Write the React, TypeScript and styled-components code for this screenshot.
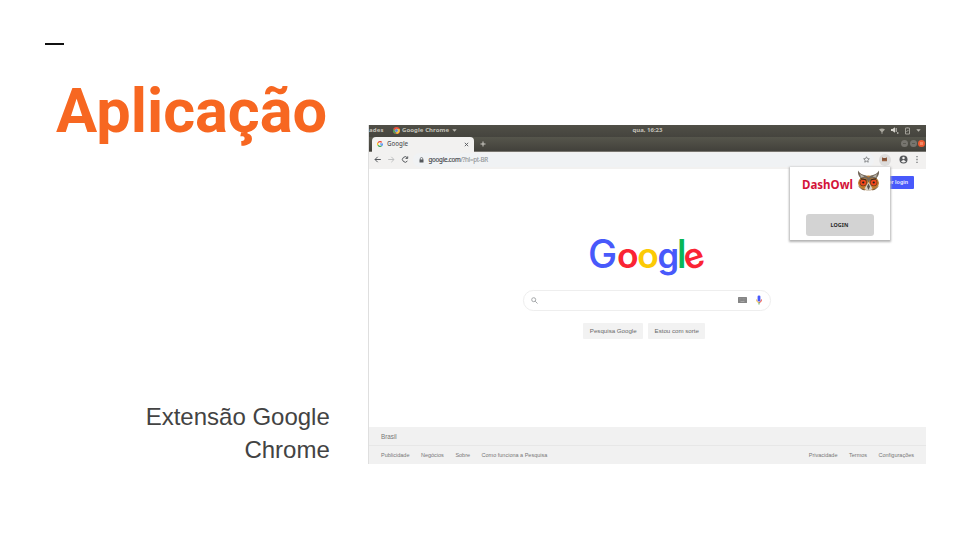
import React from "react";
import styled, { createGlobalStyle } from "styled-components";

const GlobalStyle = createGlobalStyle`
  * { box-sizing: border-box; }
  body { margin: 0; background: #fff; }
  svg { display: block; flex: none; }
`;

const Slide = styled.main`
  width: 960px;
  height: 540px;
  overflow: hidden;
  display: grid;
  grid-template-columns: 330px 558px;
  column-gap: 38px;
  background: #fff;
  font-family: "Liberation Sans", Arial, sans-serif;
`;

const Intro = styled.section`
  display: flex;
  flex-direction: column;
`;

const Dash = styled.div`
  width: 19px;
  height: 2px;
  margin: 42.5px 0 0 44.5px;
  background: #111;
`;

const Title = styled.h1`
  margin: 30.5px 0 0 56px;
  font: 700 61.3px/72px Roboto, sans-serif;
  color: #f76721;
  white-space: nowrap;
`;

const Subtitle = styled.p`
  margin: 253px 0 0 129.8px;
  width: 200px;
  font-size: 24px;
  line-height: 33px;
  text-align: right;
  color: #434343;
`;

const Browser = styled.section`
  width: 558px;
  height: 339px;
  margin-top: 125px;
  display: flex;
  flex-direction: column;
  overflow: hidden;
  background: #fff;
  border-left: 1px solid #dfdfdf;
`;

const SystemBar = styled.div`
  height: 11.5px;
  flex: none;
  display: grid;
  grid-template-columns: 1fr 30px 1fr;
  align-items: center;
  background: linear-gradient(#504f47, #45443e);
  color: #c4c2ba;
  font: 700 6px/11px "Noto Sans", sans-serif;
  white-space: nowrap;
`;

const SystemSide = styled.div<{ $end?: boolean }>`
  display: flex;
  align-items: center;
  height: 11px;
  justify-content: ${(p) => (p.$end ? "flex-end" : "flex-start")};
  gap: ${(p) => (p.$end ? "6px" : "0")};
  padding-right: ${(p) => (p.$end ? "5px" : "0")};
`;

const Activities = styled.span`
  width: 24px;
  letter-spacing: 0.15px;
`;

const AppName = styled.span`
  margin: 0 3px 0 2px;
  letter-spacing: 0.08px;
`;

const TabStrip = styled.div`
  height: 15px;
  flex: none;
  display: flex;
  align-items: center;
  background: linear-gradient(#56564c, #42413b);
  border-bottom: 1px solid #77756f;
`;

const Tab = styled.div`
  width: 102px;
  height: 15px;
  margin: 0 0 -1px 3px;
  padding: 0 5px 0 5px;
  display: flex;
  align-items: center;
  background: #f2f1f0;
  border-radius: 4px 4px 0 0;
  color: #55575a;
  font: 500 6.2px/14px "Noto Sans", sans-serif;
  svg:last-child { margin-left: auto; }
`;

const TabTitle = styled.span`
  margin-left: 4px;
`;

const NewTab = styled.span`
  margin: 0 auto 0 6px;
`;

const WindowButtons = styled.div`
  display: flex;
  gap: 1.5px;
  padding-right: 1px;
`;

const WindowButton = styled.i<{ $close?: boolean }>`
  width: 7px;
  height: 7px;
  display: grid;
  place-items: center;
  border-radius: 50%;
  background: ${(p) => (p.$close ? "#ed5b32" : "#77756f")};
  &::after {
    content: "";
    width: 3px;
    height: ${(p) => (p.$close ? "3px" : "1px")};
    background: ${(p) => (p.$close ? "#f28a68" : "#5b5a53")};
  }
`;

const Toolbar = styled.div`
  height: 17px;
  flex: none;
  display: flex;
  align-items: center;
  background: #f2f1f0;
  padding: 0 0 1px 5px;
`;

const NavIcons = styled.div`
  display: flex;
  gap: 6.5px;
`;

const Address = styled.div`
  width: 465px;
  height: 14px;
  margin-left: 4px;
  padding: 0 4px 0 6px;
  display: flex;
  align-items: center;
  border-radius: 7px;
  background: #f0f2f4;
  color: #45484b;
  font: 6.2px/14px "Noto Sans", sans-serif;
  letter-spacing: -0.24px;
  svg:last-child { margin-left: auto; }
`;

const Url = styled.span`
  margin-left: 4.5px;
  -webkit-text-stroke: 0.15px currentColor;
  em { color: #96999c; font-style: normal; }
`;

const ExtensionButton = styled.div`
  width: 12px;
  height: 12px;
  margin: 0 8.5px 0 5px;
  display: grid;
  place-items: center;
  background: #dddcdb;
  border-radius: 50%;
`;

const Page = styled.div`
  position: relative;
  flex: 1;
  display: flex;
  flex-direction: column;
  align-items: center;
`;

const SignIn = styled.div`
  align-self: flex-end;
  width: 49px;
  height: 13px;
  margin: 7px 12.5px 0 0;
  padding-right: 5.5px;
  background: #4859fb;
  border-radius: 1px;
  color: #e9ebff;
  font: 700 5.4px/13px "Liberation Sans", sans-serif;
  text-align: right;
`;

const Popup = styled.aside`
  position: absolute;
  z-index: 1;
  top: -2px;
  right: 36.5px;
  width: 100px;
  height: 73px;
  display: flex;
  flex-direction: column;
  align-items: center;
  background: #fff;
  box-shadow: 0 0.5px 2px 1px #b5b5b5;
`;

const Brand = styled.div`
  align-self: stretch;
  height: 29px;
  padding: 3px 10px 0 12.5px;
  display: flex;
  justify-content: space-between;
  color: #d31439;
  font: 700 11.5px/29px "Noto Sans", sans-serif;
`;

const LoginButton = styled.div`
  width: 68px;
  height: 22px;
  margin-top: 18px;
  background: #d3d3d3;
  border-radius: 3px;
  color: #292929;
  font: 700 5.4px/22px "Noto Sans", sans-serif;
  text-align: center;
  letter-spacing: 0.1px;
`;

const LogoWrap = styled.div`
  margin: 41px 0 0 -1px;
`;

const SearchBox = styled.div`
  width: 248px;
  height: 20.5px;
  margin: 5.5px 0 0 -0.5px;
  padding: 0 8px 0 6.5px;
  display: flex;
  align-items: center;
  border: 1px solid #eeeeee;
  border-radius: 10.25px;
  svg:nth-child(2) { margin: 0 9px 0 auto; }
`;

const Actions = styled.div`
  display: flex;
  gap: 5px;
  margin: 12.5px 0 0 -6.5px;
`;

const Action = styled.div<{ $width: number }>`
  width: ${(p) => p.$width}px;
  height: 16px;
  background: #f2f2f2;
  border-radius: 1px;
  color: #696969;
  font-size: 6.15px;
  line-height: 16px;
  text-align: center;
`;

const Footer = styled.footer`
  flex: none;
  height: 37px;
  background: #f1f1f1;
  color: #777;
  font-size: 5.5px;
`;

const Country = styled.div`
  height: 19px;
  padding: 0 12px;
  border-bottom: 1px solid #e7e7e7;
  font-size: 6.3px;
  line-height: 19px;
`;

const Links = styled.div`
  height: 18px;
  padding: 0 12px;
  display: flex;
  justify-content: space-between;
  line-height: 18px;
`;

const LinkGroup = styled.div`
  display: flex;
  gap: 11.5px;
`;

const ChromeIcon = () => (
  <svg width="7" height="7" viewBox="0 0 14 14">
    <circle cx="7" cy="7" r="7" fill="#e9503b" />
    <path d="M1 3.5 7 14A7 7 0 0 1 1 3.5" fill="#41a65a" />
    <path d="M7 14A7 7 0 0 0 13 4H7z" fill="#f4c83b" />
    <circle cx="7" cy="7" r="3" fill="#4b87e6" stroke="#ddd" strokeWidth=".7" />
  </svg>
);

const Caret = () => (
  <svg width="5" height="3" viewBox="0 0 5 3"><path d="M.3.2h4.4L2.5 2.8z" fill="#bbb9b1" /></svg>
);

const Cross = () => (
  <svg width="5" height="5" viewBox="0 0 5 5"><path d="m.8.8 3.4 3.4m0-3.4L.8 4.2" stroke="#55575a" strokeWidth=".9" /></svg>
);

const GoogleMark = () => (
  <svg width="6" height="6" viewBox="0 0 12 12" fill="none" strokeWidth="2.3">
    <path d="M2 3.5A4.7 4.7 0 0 1 9.5 2.6" stroke="#ea4335" />
    <path d="M2 3.5a5 5 0 0 0 0 5" stroke="#fbbc05" />
    <path d="M2 8.5a4.7 4.7 0 0 0 7.3.9" stroke="#34a853" />
    <path d="M6 6h4.7q0 2-1.4 3.5" stroke="#4285f4" />
  </svg>
);

const Owl = () => (
  <svg width="23" height="23" viewBox="0 0 46 46">
    <ellipse cx="23" cy="26" rx="21" ry="15" fill="#c27d2e" />
    <path d="M2 1q4 8 16 10l5 4 5-4Q40 9 44 1q1 9-5 15l-12 1-4 9-4-9-12-1Q1 10 2 1" fill="#75695c" />
    <path d="m6 8 9 5-7 2zm34 0-9 5 7 2z" fill="#b9b4aa" />
    <path d="M4 33q4 6 11 7M42 33q-4 6-11 7" fill="none" stroke="#6b5033" strokeWidth="2" />
    <circle cx="12.5" cy="25" r="7.3" fill="#6d3a1d" />
    <circle cx="33.5" cy="25" r="7.3" fill="#6d3a1d" />
    <circle cx="12.5" cy="25" r="5.8" fill="#f2481c" />
    <circle cx="33.5" cy="25" r="5.8" fill="#f2481c" />
    <circle cx="12.5" cy="25" r="2.2" fill="#271e1c" />
    <circle cx="33.5" cy="25" r="2.2" fill="#271e1c" />
    <path d="m23 24-8 13q8 10 16 0z" fill="#d5d1c8" />
    <path d="m23 27-3 6 3 7 3-7z" fill="#5b554e" />
    <path d="m7 17 12 3m20-3-12 3" stroke="#3a2a20" strokeWidth="2" />
  </svg>
);

const letters = [
  { glyph: "G", x: 0, width: 29.2, color: "#4859fb", size: 40, weight: 500 },
  { glyph: "o", x: 29, width: 21.6, color: "#fa2434", size: 35, weight: 600 },
  { glyph: "o", x: 49.3, width: 21.6, color: "#fcca05", size: 35, weight: 600 },
  { glyph: "g", x: 69.6, width: 21.6, color: "#4859fb", size: 35, weight: 600 },
  { glyph: "l", x: 89.2, width: 9, color: "#08b656", size: 39, weight: 600 },
];

const GoogleLogo = () => (
  <svg width="118" height="55" viewBox="0 0 118 55" overflow="visible" fontFamily="Inter, sans-serif">
    {letters.map((l) => (
      <text key={l.x} x={l.x} y="38" fontSize={l.size} fontWeight={l.weight} fill={l.color} textLength={l.width} lengthAdjust="spacingAndGlyphs">
        {l.glyph}
      </text>
    ))}
    <text x="95.6" y="38" fontSize="35" fontWeight="600" fill="#fa2434" textLength="20.5" lengthAdjust="spacingAndGlyphs" transform="rotate(-18 106 28)">e</text>
  </svg>
);

const App = () => (
  <Slide>
    <GlobalStyle />
    <Intro>
      <Dash />
      <Title>Aplicação</Title>
      <Subtitle>Extensão Google Chrome</Subtitle>
    </Intro>
    <Browser>
      <SystemBar>
        <SystemSide>
          <Activities>ades</Activities>
          <ChromeIcon />
          <AppName>Google Chrome</AppName>
          <Caret />
        </SystemSide>
        <span>qua, 16:23</span>
        <SystemSide $end>
          <svg width="6" height="6" viewBox="0 0 6 6"><path d="M0 1.5Q3-.5 6 1.5L3.5 4v1.7h-1V4z" fill="#aaa89f" /></svg>
          <svg width="8" height="7" viewBox="0 0 8 7"><path d="M0 2h1.5L4 .3v5.4L1.5 4H0z" fill="#d6d4cd" /><path d="M5.2 1v4M6.8 5v2" stroke="#d6d4cd" strokeWidth=".9" /></svg>
          <svg width="5" height="8" viewBox="0 0 5 8"><path d="M.5 1h4v6h-4zM1.7 0h1.6M1.4 5l2-2" fill="none" stroke="#a19f97" /></svg>
          <Caret />
        </SystemSide>
      </SystemBar>
      <TabStrip>
        <Tab><GoogleMark /><TabTitle>Google</TabTitle><Cross /></Tab>
        <NewTab><svg width="6" height="6" viewBox="0 0 6 6"><path d="M3 .5v5M.5 3h5" stroke="#cccac4" /></svg></NewTab>
        <WindowButtons><WindowButton /><WindowButton /><WindowButton $close /></WindowButtons>
      </TabStrip>
      <Toolbar>
        <NavIcons>
          <svg width="7" height="7" viewBox="0 0 7 7"><path d="M6.8 3.5H1M3.7.8 1 3.5l2.7 2.7" fill="none" stroke="#55585c" /></svg>
          <svg width="7" height="7" viewBox="0 0 7 7"><path d="M.2 3.5H6M3.3.8 6 3.5 3.3 6.2" fill="none" stroke="#bfc0c1" /></svg>
          <svg width="8" height="7" viewBox="0 0 8 7"><path d="M6.4 1.9A2.7 2.7 0 1 0 6.4 5M6.7.4v2H4.5" fill="none" stroke="#55585c" /></svg>
        </NavIcons>
        <Address>
          <svg width="5" height="6" viewBox="0 0 5 6"><path d="M.5 2.5h4v3h-4z" fill="#55585c" /><path d="M1.3 3V1.7a1.2 1.2 0 0 1 2.4 0V3" fill="none" stroke="#55585c" strokeWidth=".7" /></svg>
          <Url>google.com<em>/?hl=pt-BR</em></Url>
          <svg width="7" height="7" viewBox="0 0 14 14"><path d="m7 1.5 1.7 3.6 4 .5-3 2.8.8 4L7 10.5l-3.5 1.9.8-4-3-2.8 4-.5z" fill="none" stroke="#6c6f72" strokeWidth="1.5" /></svg>
        </Address>
        <ExtensionButton><svg width="5" height="5" viewBox="0 0 5 5"><path d="m0 .3 1.5.6h2L5 .3v4H0z" fill="#9a6040" /><path d="M.5 2h4" stroke="#6b4634" /></svg></ExtensionButton>
        <svg width="9" height="9" viewBox="0 0 18 18"><circle cx="9" cy="9" r="8" fill="#55575a" /><circle cx="9" cy="6" r="2.5" fill="#f2f1f0" /><path d="M4 13q5-6 10 0-5 4-10 0" fill="#f2f1f0" /></svg>
        <svg width="18" height="9" viewBox="0 0 18 9"><path d="M9 1v1.3m0 1.5v1.4m0 1.5V8" stroke="#696b6e" strokeWidth="1.2" /></svg>
      </Toolbar>
      <Page>
        <SignIn>er login</SignIn>
        <Popup>
          <Brand><span>DashOwl</span><Owl /></Brand>
          <LoginButton>LOGIN</LoginButton>
        </Popup>
        <LogoWrap><GoogleLogo /></LogoWrap>
        <SearchBox>
          <svg width="7" height="7" viewBox="0 0 7 7"><circle cx="2.7" cy="2.7" r="2" fill="none" stroke="#a5a8aa" /><path d="m4.2 4.2 2.3 2.3" stroke="#a5a8aa" /></svg>
          <svg width="9" height="6" viewBox="0 0 18 12"><rect width="18" height="12" rx="1" fill="#858585" /><path d="M2 3h14M2 6h14" stroke="#a4a4a4" strokeWidth="1" strokeDasharray="1.5 1.2" /><path d="M5 9h8" stroke="#c4c4c4" /></svg>
          <svg width="6" height="10" viewBox="0 0 12 20"><path d="M1 9q0 6 5 6" fill="none" stroke="#f5bd42" strokeWidth="2" /><path d="M11 9q0 6-5 6" fill="none" stroke="#ed4938" strokeWidth="2" /><path d="M6 15v4" stroke="#51aa65" strokeWidth="2" /><rect x="3.2" y="1" width="5.6" height="12" rx="2.5" fill="#4859fb" /></svg>
        </SearchBox>
        <Actions><Action $width={60}>Pesquisa Google</Action><Action $width={57}>Estou com sorte</Action></Actions>
      </Page>
      <Footer>
        <Country>Brasil</Country>
        <Links>
          <LinkGroup><span>Publicidade</span><span>Negócios</span><span>Sobre</span><span>Como funciona a Pesquisa</span></LinkGroup>
          <LinkGroup><span>Privacidade</span><span>Termos</span><span>Configurações</span></LinkGroup>
        </Links>
      </Footer>
    </Browser>
  </Slide>
);

export default App;
